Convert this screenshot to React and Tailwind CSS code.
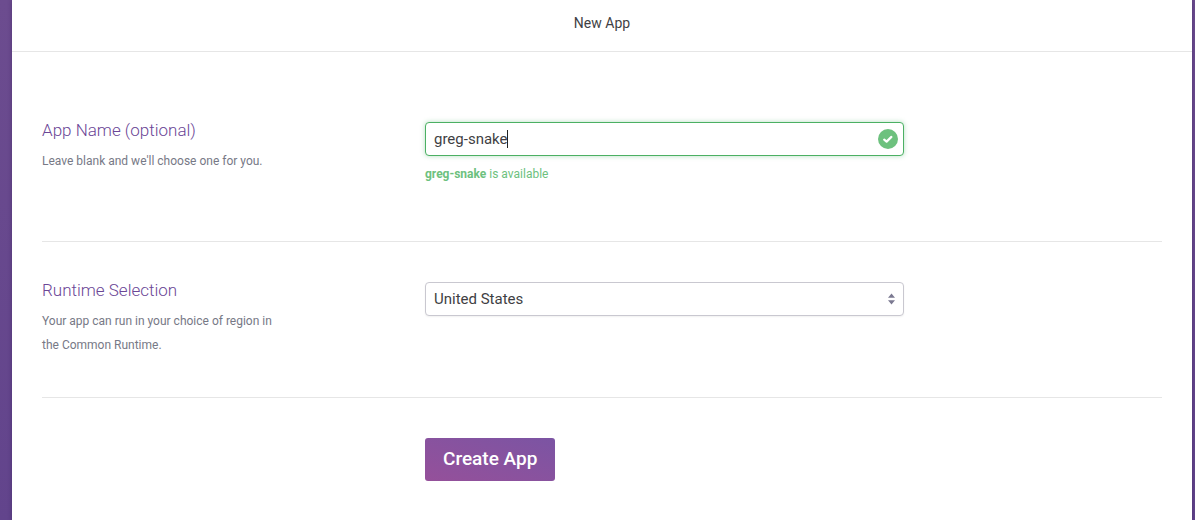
import { useState } from 'react';

function Row({ children, last }) {
  return (
    <div
      className={
        last
          ? 'grid grid-cols-[383fr_479fr_258fr] py-10'
          : 'grid grid-cols-[383fr_479fr_258fr] border-b border-[#e6e6e6] py-10'
      }
    >
      {children}
    </div>
  );
}

function Field({ id, label, hint }) {
  return (
    <div className="max-w-60">
      <label htmlFor={id} className="block text-[17px] leading-4 font-light text-[#6b4696]">
        {label}
      </label>
      <p id={`${id}-hint`} className="mt-[11px] text-xs leading-6 text-[#777986]">
        {hint}
      </p>
    </div>
  );
}

export default function App() {
  const [name, setName] = useState('greg-snake');
  const [editing, setEditing] = useState(false);

  return (
    <div className="min-h-screen bg-linear-to-b from-[#6c4c8f] to-[#62448c] pr-[3px] pl-3 font-['Roboto',sans-serif]">
      <main className="min-h-screen bg-white shadow-[0_0_4px_rgba(40,20,70,0.4)]">
        <header className="flex h-13 items-center justify-center border-b border-[#e6e6e6] pb-1.5">
          <h1 className="text-sm leading-6 text-[#3f3f44]">New App</h1>
        </header>

        <form className="px-[30px] pt-[30px]" onSubmit={(e) => e.preventDefault()}>
          <div className="grid grid-cols-[383fr_479fr_258fr] border-b border-[#e6e6e6] pt-10 pb-[55px]">
            <Field
              id="app-name"
              label="App Name (optional)"
              hint="Leave blank and we'll choose one for you."
            />
            <div>
              <div className="relative">
                <input
                  id="app-name"
                  type="text"
                  value={name}
                  aria-describedby="app-name-hint app-name-status"
                  onFocus={() => setEditing(true)}
                  onChange={(e) => setName(e.target.value)}
                  className="block h-[34px] w-full rounded-sm border border-[#4bb063] bg-white pr-9 pl-2 text-[15px] text-[#3f3f44] shadow-[0_0_5px_rgba(75,176,99,0.4)] outline-none"
                />
                {!editing && (
                  <span className="pointer-events-none absolute top-2 left-[82px] h-[18px] w-px bg-[#222222]" />
                )}
                <svg
                  viewBox="0 0 20 20"
                  className="pointer-events-none absolute top-[7px] right-[6px] size-5"
                  aria-hidden="true"
                >
                  <circle cx="10" cy="10" r="10" fill="#6dc17e" />
                  <path
                    d="M6.2 10.6 L8.6 12.6 L13.4 7.9"
                    fill="none"
                    stroke="#fff"
                    strokeWidth="2.2"
                    strokeLinecap="round"
                    strokeLinejoin="round"
                  />
                </svg>
              </div>
              <p id="app-name-status" className="mt-1.5 text-xs leading-6 text-[#6dc17e]">
                <strong className="font-bold">{name}</strong> is available
              </p>
            </div>
          </div>

          <Row>
            <Field
              id="region"
              label="Runtime Selection"
              hint="Your app can run in your choice of region in the Common Runtime."
            />
            <div className="relative self-start">
              <select
                id="region"
                aria-describedby="region-hint"
                className="block h-[34px] w-full appearance-none rounded-sm border border-[#c9c8d0] bg-white pr-8 pl-2 text-[15px] text-[#3f3f44] shadow-[0_1px_2px_rgba(0,0,0,0.06)]"
              >
                <option>United States</option>
                <option>Europe</option>
              </select>
              <svg
                viewBox="0 0 7 12"
                className="pointer-events-none absolute top-[11px] right-[9px] h-3 w-[7px]"
                aria-hidden="true"
              >
                <path d="M3.5 0.5 L7 4.7 H0 Z M0 7.3 H7 L3.5 11.5 Z" fill="#7b7991" />
              </svg>
            </div>
          </Row>

          <Row last>
            <div className="col-start-2">
              <button
                type="submit"
                className="h-[43px] rounded-[3px] bg-linear-to-tr from-[#95509a] to-[#7b54a3] px-[18px] text-[19px] font-medium text-white"
              >
                Create App
              </button>
            </div>
          </Row>
        </form>
      </main>
    </div>
  );
}
